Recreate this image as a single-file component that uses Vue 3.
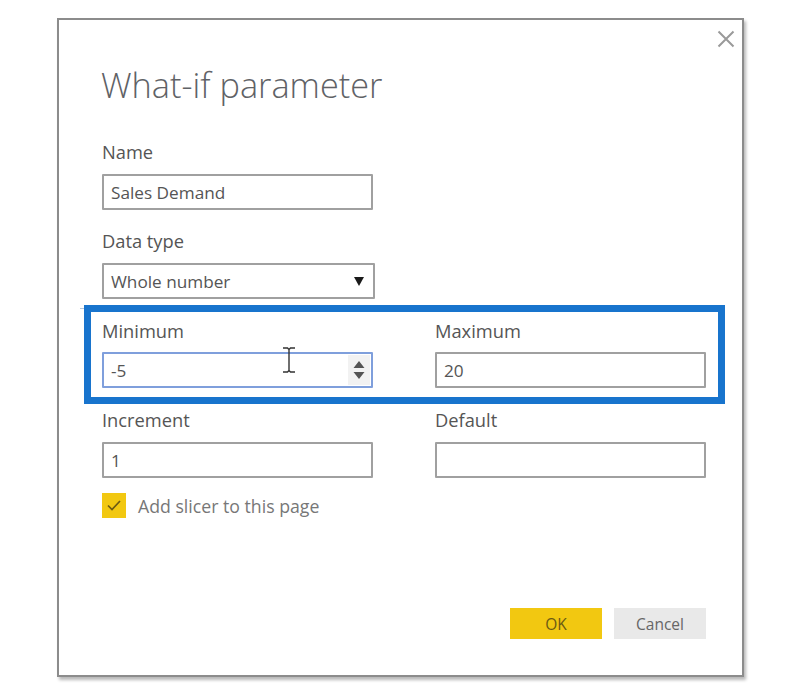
<template>
  <div class="page">
    <div class="dialog">
      <button class="close" aria-label="Close">
        <svg width="18" height="18" viewBox="0 0 18 18">
          <path d="M1.5 1.5 L16.5 16.5 M16.5 1.5 L1.5 16.5" stroke="#9a9a9a" stroke-width="2" fill="none" />
        </svg>
      </button>

      <h1 class="title">What-if parameter</h1>

      <label class="label first">Name</label>
      <div class="field name-field">Sales Demand</div>

      <label class="label type-label">Data type</label>
      <div class="field select">
        <span>Whole number</span>
        <svg class="caret" width="10" height="9" viewBox="0 0 10 9"><path d="M0 0 H10 L5 9 Z" fill="#1a1a1a" /></svg>
      </div>

      <div class="row min-row">
        <div class="highlight"></div>
        <div class="col">
          <label class="label">Minimum</label>
          <div class="field focused">
            <span>-5</span>
            <span class="spinner">
              <svg width="12" height="20" viewBox="0 0 12 20">
                <path d="M6 1 L11.5 8 H0.5 Z M0.5 12 H11.5 L6 19 Z" fill="#555" />
              </svg>
            </span>
            <svg class="ibeam" width="14" height="26" viewBox="0 0 14 26">
              <path d="M1 1 H5.5 L7 2.5 L8.5 1 H13 M7 2.5 V23.5 M1 25 H5.5 L7 23.5 L8.5 25 H13" stroke="#333" stroke-width="1.4" fill="none" />
            </svg>
          </div>
        </div>
        <div class="col">
          <label class="label">Maximum</label>
          <div class="field">20</div>
        </div>
      </div>

      <div class="row inc-row">
        <div class="col">
          <label class="label">Increment</label>
          <div class="field">1</div>
        </div>
        <div class="col">
          <label class="label">Default</label>
          <div class="field"></div>
        </div>
      </div>

      <div class="check-row">
        <span class="checkbox">
          <svg width="14" height="11" viewBox="0 0 14 11">
            <path d="M1 5.5 L5 9.5 L13 1" stroke="#6b5a14" stroke-width="1.7" fill="none" />
          </svg>
        </span>
        <span class="check-label">Add slicer to this page</span>
      </div>

      <div class="buttons">
        <button class="btn ok">OK</button>
        <button class="btn cancel">Cancel</button>
      </div>
    </div>
  </div>
</template>

<script setup>
</script>

<style>
html, body {
  margin: 0;
  background: #fff;
}
</style>

<style scoped>
.page {
  width: 800px;
  height: 687px;
  padding: 18px 0 0 57px;
  box-sizing: border-box;
  font-family: "Open Sans", "Noto Sans", sans-serif;
  color: #555;
  overflow: hidden;
}

.dialog {
  position: relative;
  width: 687px;
  height: 659px;
  box-sizing: border-box;
  padding: 43px 35px 0 43px;
  background: #fff;
  border: 2px solid #8c8c8c;
  box-shadow: 2px 3px 3px rgba(0, 0, 0, 0.28);
  display: flex;
  flex-direction: column;
}

.close {
  position: absolute;
  top: 10px;
  right: 7px;
  padding: 0;
  border: none;
  background: none;
  line-height: 0;
}

.title {
  margin: 0;
  margin-left: -1px;
  font-size: 34.3px;
  font-weight: 300;
  line-height: 44px;
  color: #5f6266;
}

.label {
  display: block;
  font-size: 18.3px;
  line-height: 24px;
  color: #555;
}

.first {
  margin-top: 33px;
}

.type-label {
  margin-top: 19px;
}

.field {
  position: relative;
  display: flex;
  align-items: center;
  justify-content: space-between;
  box-sizing: border-box;
  width: 271px;
  height: 36px;
  margin-top: 10px;
  padding: 0 7px;
  border: 2px solid #a0a0a0;
  border-radius: 1px;
  font-size: 17.2px;
  color: #555;
  background: #fff;
}

.select {
  width: 273px;
}

.caret {
  margin-right: 2px;
}

.row {
  position: relative;
  display: flex;
  gap: 62px;
}

.col {
  width: 271px;
}

.min-row {
  margin-top: 20px;
}

.min-row .field {
  margin-top: 9px;
}

.inc-row {
  margin-top: 20px;
}

.inc-row .field {
  margin-top: 10px;
}

.highlight {
  position: absolute;
  left: -18px;
  right: -18px;
  top: -14px;
  bottom: -16px;
  border: 7px solid #1874cd;
  pointer-events: none;
}

/* little leftover tick from the recording, just left of the frame */
.highlight::before {
  content: "";
  position: absolute;
  left: -11px;
  top: -4px;
  width: 4px;
  height: 1px;
  background: #b5c8dc;
}

.focused {
  border-color: #7f9fdc;
  padding-right: 1px;
}

.spinner {
  display: flex;
  align-items: center;
  justify-content: center;
  width: 22px;
  height: 30px;
  background: #f2f2f2;
}

.ibeam {
  position: absolute;
  left: 178px;
  top: -7px;
}

.check-row {
  display: flex;
  align-items: center;
  margin-top: 15px;
}

.checkbox {
  display: flex;
  align-items: center;
  justify-content: center;
  width: 24px;
  height: 25px;
  background: #f2c811;
}

.check-label {
  margin-left: 12px;
  font-size: 17.7px;
  color: #777;
}

.buttons {
  position: absolute;
  right: 36px;
  bottom: 36px;
  display: flex;
  gap: 12px;
}

.btn {
  width: 92px;
  height: 31px;
  padding: 0;
  border: none;
  font-family: inherit;
  font-size: 15.5px;
}

.ok {
  background: #f2c811;
  color: #6b5a14;
}

.cancel {
  background: #e9e9e9;
  color: #666;
}
</style>
